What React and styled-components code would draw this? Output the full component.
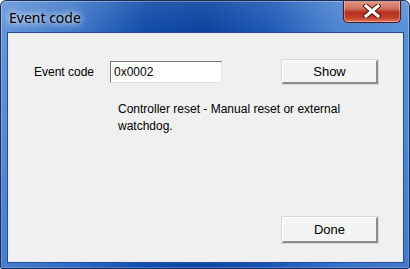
import styled, { createGlobalStyle } from "styled-components";

const GlobalStyle = createGlobalStyle`
  html, body {
    margin: 0;
    padding: 0;
    background: #ffffff;
  }
`;

const Window = styled.div`
  width: 410px;
  height: 269px;
  box-sizing: border-box;
  display: flex;
  flex-direction: column;
  border: 1px solid #1d2f52;
  border-radius: 6px 6px 2px 2px;
  background:
    linear-gradient(to bottom, rgba(255, 255, 255, 0.1) 0px, rgba(255, 255, 255, 0) 33px),
    linear-gradient(to right, #6496da 0%, #3f78c8 18%, #0f4aa8 36%, #0a419e 50%, #1d58b6 66%, #4a82cf 82%, #5990d7 100%);
  box-shadow: inset 0 0 0 1px rgba(255, 255, 255, 0.3);
  font-family: "Liberation Sans", Arial, sans-serif;
  overflow: hidden;
`;

const TitleBar = styled.div`
  height: 32px;
  flex-shrink: 0;
  display: flex;
  align-items: flex-start;
  justify-content: space-between;
  padding: 0 8px 0 8px;
`;

const Title = styled.div`
  margin-top: 7px;
  font-family: "Noto Sans", "Open Sans", sans-serif;
  font-size: 14px;
  color: #000;
  text-shadow: 0 0 6px rgba(255, 255, 255, 0.95), 0 0 10px rgba(255, 255, 255, 0.8);
`;

const CloseButton = styled.div`
  width: 58px;
  height: 23px;
  margin-top: -1px;
  box-sizing: border-box;
  border: 1px solid #4e1616;
  border-top: none;
  border-radius: 0 0 5px 5px;
  background: linear-gradient(to bottom, #e59c8a 0%, #d07060 40%, #b5301c 55%, #c2402a 80%, #dc7a60 100%);
  box-shadow: inset 0 0 0 1px rgba(255, 255, 255, 0.35);
  display: flex;
  align-items: center;
  justify-content: center;
`;

const Frame = styled.div`
  flex: 1;
  display: flex;
  padding: 0 7px 6px 7px;
  background: linear-gradient(to bottom, rgba(20, 80, 190, 0) 0%, rgba(20, 80, 190, 0.35) 100%);
`;

const Client = styled.div`
  flex: 1;
  display: flex;
  flex-direction: column;
  background: #f0f0f0;
  border: 1px solid #e4ecf8;
  outline: 1px solid #2a4f8c;
  padding: 26px 24px 18px 25px;
  font-size: 12px;
  color: #000;
`;

const Row = styled.div`
  display: flex;
  align-items: center;
`;

const Label = styled.div`
  width: 76px;
`;

const Input = styled.div`
  width: 112px;
  height: 22px;
  box-sizing: border-box;
  background: #fff;
  border-top: 1px solid #7a7a7a;
  border-left: 1px solid #7a7a7a;
  border-right: 1px solid #e3e3e3;
  border-bottom: 1px solid #e3e3e3;
  padding: 0 3px;
  display: flex;
  align-items: center;
`;

const Button = styled.div`
  width: 96px;
  height: ${(p) => p.$h}px;
  box-sizing: border-box;
  margin-left: auto;
  background: #f4f4f4;
  border-top: 1px solid #ffffff;
  border-left: 1px solid #ffffff;
  border-right: 2px solid #8c8c8c;
  border-bottom: 2px solid #8c8c8c;
  box-shadow: 0 0 0 1px #d8d8d8;
  display: flex;
  align-items: center;
  justify-content: center;
  font-size: 13px;
`;

const Description = styled.div`
  margin: 17px 0 0 84px;
  line-height: 17px;
  width: 260px;
`;

const Spacer = styled.div`
  flex: 1;
`;

const CloseIcon = () => (
  <svg width="18" height="14" viewBox="0 0 18 14">
    <path d="M3 2 L15 12 M15 2 L3 12" stroke="#4a1410" strokeWidth="5" strokeLinecap="square" />
    <path d="M3 2 L15 12 M15 2 L3 12" stroke="#ffffff" strokeWidth="3" strokeLinecap="square" />
  </svg>
);

const App = () => (
  <>
    <GlobalStyle />
    <Window>
      <TitleBar>
        <Title>Event code</Title>
        <CloseButton>
          <CloseIcon />
        </CloseButton>
      </TitleBar>
      <Frame>
        <Client>
          <Row>
            <Label>Event code</Label>
            <Input>0x0002</Input>
            <Button $h={24}>Show</Button>
          </Row>
          <Description>Controller reset - Manual reset or external watchdog.</Description>
          <Spacer />
          <Row>
            <Button $h={26}>Done</Button>
          </Row>
        </Client>
      </Frame>
    </Window>
  </>
);

export default App;
